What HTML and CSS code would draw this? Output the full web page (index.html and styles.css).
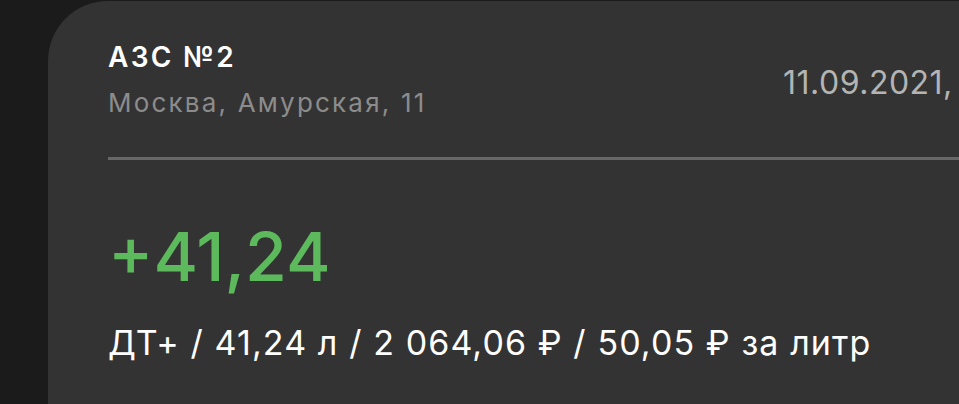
FILE: index.html
```html
<!DOCTYPE html>
<html lang="ru">
<head>
<meta charset="utf-8">
<link rel="stylesheet" href="styles.css">
</head>
<body>
<div class="card">
  <div class="head">
    <div class="place">
      <div class="title">АЗС №2</div>
      <div class="addr">Москва, Амурская, 11</div>
    </div>
    <div class="date">11.09.2021,</div>
  </div>
  <div class="divider"></div>
  <div class="amount">+41,24</div>
  <div class="details">ДТ+ / 41,24 л / 2 064,06 ₽ / 50,05 ₽ за литр</div>
</div>
</body>
</html>
```
FILE: styles.css
```css
html, body {
  margin: 0;
  padding: 0;
  background: #1b1b1b;
  overflow: hidden;
  width: 959px;
  height: 404px;
}
body {
  font-family: Inter, "Noto Sans", sans-serif;
  padding-top: 1px;
  box-sizing: border-box;
}
.card {
  margin-left: 48px;
  width: 1100px;
  height: 480px;
  background: #333333;
  border-radius: 60px;
  padding-left: 60px;
  box-sizing: border-box;
}
.head {
  display: flex;
  padding-top: 40px;
}
.place {
  width: 675px;
  flex: none;
}
.title {
  color: #ffffff;
  font-size: 28px;
  font-weight: 600;
  line-height: 32px;
  letter-spacing: 2.3px;
}
.addr {
  color: #8c8c8c;
  font-size: 26px;
  line-height: 32px;
  margin-top: 14px;
  letter-spacing: 2.2px;
}
.date {
  color: #b4b4b4;
  font-size: 32px;
  line-height: 40px;
  margin-top: 22px;
  letter-spacing: 0.5px;
  white-space: nowrap;
}
.divider {
  height: 3px;
  background: #676767;
  margin-top: 38px;
}
.amount {
  color: #5cba5c;
  font-size: 68px;
  font-weight: 500;
  line-height: 80px;
  margin-top: 56px;
}
.details {
  color: #ffffff;
  font-size: 34px;
  line-height: 40px;
  margin-top: 27px;
  letter-spacing: 1.1px;
  white-space: nowrap;
}
```
